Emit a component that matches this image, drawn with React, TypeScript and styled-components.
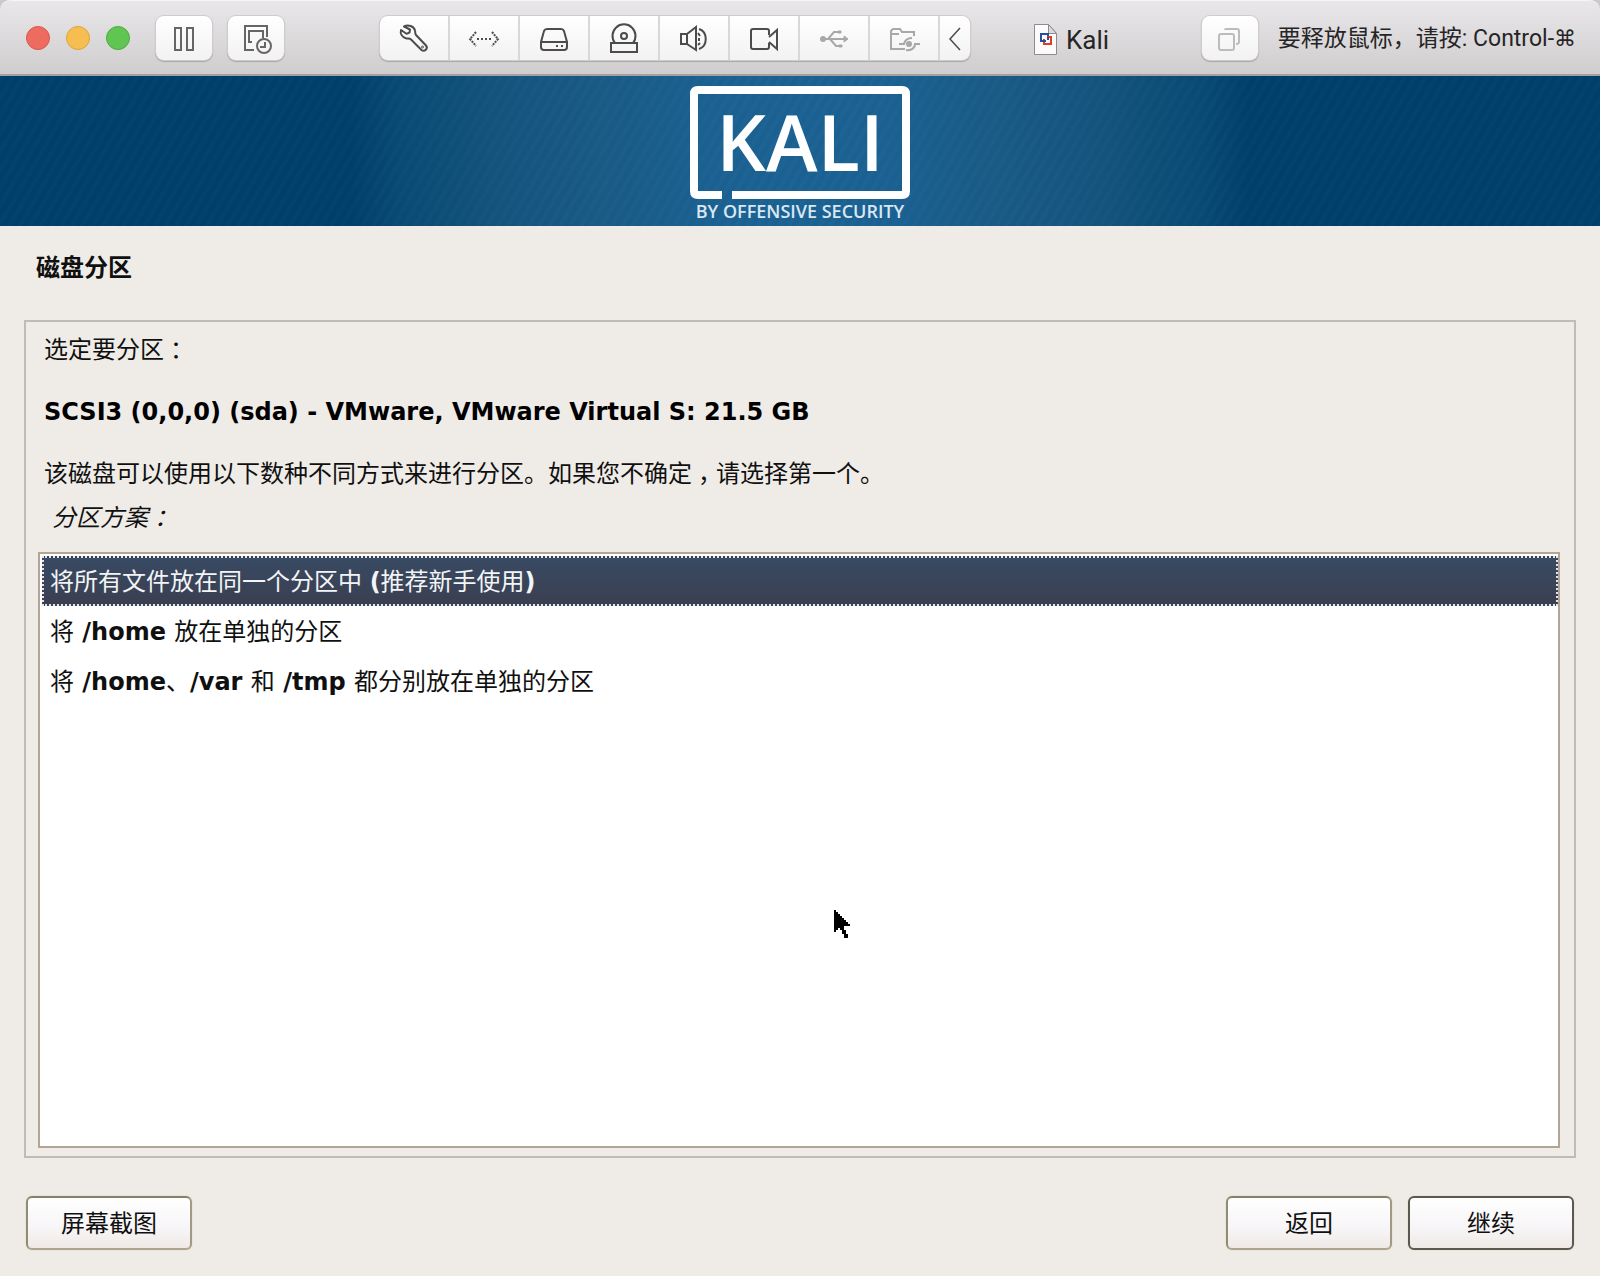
import React, { useState } from "react";
import styled, { createGlobalStyle, css } from "styled-components";

const GlobalStyle = createGlobalStyle`
  *, *::before, *::after { box-sizing: border-box; }
  html, body, #root { height: 100%; }
  body {
    margin: 0;
    background: #efece7;
    color: #101010;
    font-family: "DejaVu Sans", "Noto Sans CJK SC", sans-serif;
    font-size: 24px;
    line-height: 32px;
  }
  button { font: inherit; color: inherit; margin: 0; padding: 0; cursor: pointer; }
`;

const Window = styled.div`
  min-height: 100%;
  display: flex;
  flex-direction: column;
`;

/* ---------- host window title bar ---------- */

const BarBack = styled.div`
  background: #c9cacc;
`;

const TitleBar = styled.header`
  display: flex;
  align-items: center;
  height: 76px;
  padding: 0 24px 0 26px;
  border-top: 1px solid #f6f4f6;
  border-bottom: 2px solid #a5a1a3;
  border-radius: 10px 10px 0 0;
  background: linear-gradient(#e9e7e9, #d0cdcf);
  font-family: Roboto, "Noto Sans CJK SC", "DejaVu Sans", sans-serif;
  color: #262526;
`;

const Lights = styled.div`
  display: flex;
  gap: 16px;
`;

const Tools = styled.div`
  display: flex;
  gap: 16px;
  margin-left: 26px;
`;

const Release = styled.div`
  display: flex;
  align-items: center;
  gap: 20px;
  margin-left: auto;
`;

const Light = styled.button<{ $fill: string; $edge: string }>`
  width: 24px;
  height: 24px;
  border: 1px solid ${(p) => p.$edge};
  border-radius: 50%;
  background: ${(p) => p.$fill};
`;

const keyFace = css`
  background: linear-gradient(#ffffff, #f3f2f3);
  box-shadow: 0 0 0 1px #cfcccf, 0 1px 1px 1px #a9a6a9;
`;

const ToolButton = styled.button`
  display: flex;
  align-items: center;
  justify-content: center;
  width: 56px;
  height: 44px;
  border: 0;
  border-radius: 8px;
  color: #676567;
  ${keyFace}
  &:disabled { color: #bdbbbd; }
`;

const Segments = styled.div`
  display: flex;
  height: 44px;
  margin-left: 96px;
  border-radius: 8px;
  overflow: hidden;
  ${keyFace}
`;

const Segment = styled.button<{ $narrow?: boolean }>`
  display: flex;
  align-items: center;
  justify-content: center;
  width: ${(p) => (p.$narrow ? 30 : 70)}px;
  border: 0;
  border-right: 2px solid #d9d7d9;
  background: none;
  color: #4d4b4d;
  &:last-child { border-right: 0; }
  &:disabled { color: #a9a7a9; }
`;

const VmName = styled.h1`
  display: flex;
  align-items: center;
  gap: 8px;
  margin: 0 0 0 64px;
  padding-top: 4px;
  font-size: 26px;
  font-weight: 400;
`;

const Hint = styled.span`
  padding-top: 2px;
  font-size: 23px;
`;

const CommandKey = styled.span`
  font-family: "DejaVu Sans", sans-serif;
  font-size: 22px;
  line-height: 24px;
`;

const Icon = ({ w = 32, h = 32, children }: { w?: number; h?: number; children: React.ReactNode }) => (
  <svg width={w} height={h} viewBox={`0 0 ${w} ${h}`} fill="none" stroke="currentColor" strokeWidth="2" aria-hidden="true">
    {children}
  </svg>
);

const PauseIcon = () => (
  <Icon>
    <path d="M7 6h6v22H7zM19 6h6v22h-6z" />
  </Icon>
);

const SnapshotIcon = () => (
  <Icon>
    <path d="M14 28H5V4h22v11" />
    <path d="M12 20H9V9h14v7" />
    <circle cx="24" cy="24" r="7" />
    <path d="M25 20v5h-5" />
  </Icon>
);

const WrenchIcon = () => (
  <Icon>
    <path
      d="M6 4.500C10 2.500 16 4 17 8.500c.5 2-.2 3.200 1 4.500l10 10.500c2.500 3-1.500 6.800-4.500 4.500L13 17.500c-1.500-1.300-3-.6-5-1.200C4 15 2 11.500 3 8l5.500 3.800 3-1.300.5-3z"
      strokeLinejoin="round"
    />
    <circle cx="24.500" cy="25" r="1" strokeWidth="1" />
  </Icon>
);

const NetworkIcon = () => (
  <Icon>
    <path d="M8 10l-6 7 6 7M24 10l6 7-6 7" strokeDasharray="2 1" />
    <path d="M9 17h2M13 17h2M17 17h2M21 17h2" />
  </Icon>
);

const DiskIcon = () => (
  <Icon>
    <path d="M9 7h14c1.500 0 2.500.8 3 2l3 11v5c0 2-1 3-3 3H6c-2 0-3-1-3-3v-5L6 9c.5-1.200 1.500-2 3-2zM3 20h26" />
    <path d="M18 24h2M23 24h2" />
  </Icon>
);

const OpticalIcon = () => (
  <Icon>
    <path d="M3 21h26v9H3zM7 21a11.500 11.500 0 1 1 18 0" />
    <circle cx="16" cy="14" r="3" />
  </Icon>
);

const SoundIcon = () => (
  <Icon>
    <path d="M3 12h6v10H3zM9 12l9-7v23l-9-6" />
    <path d="M21 7c9 3 9 17 0 20M20 11l2 3M21 16v3M20 23l2-2" />
  </Icon>
);

const CameraIcon = () => (
  <Icon>
    <path d="M21 13V9q0-2-2-2H5q-2 0-2 2v16q0 2 2 2h14q2 0 2-2v-4" />
    <path d="M21 15l8-7v19l-8-7" />
  </Icon>
);

const UsbIcon = () => (
  <Icon>
    <circle cx="5" cy="17" r="2" fill="currentColor" />
    <path d="M5 17h22M10 17l6-7h5M12 17l6 7h5" />
    <path d="M26 14l4 3-4 3zM20 9h3v2h-3zM21 23h3v2h-3z" fill="currentColor" strokeWidth="1" />
  </Icon>
);

const SharedFolderIcon = () => (
  <Icon>
    <path d="M17 27H3V9l2-2h7l2 3h12v4M3 12h8" />
    <path d="M11 22h5c1-4 4-6 8-6M18 28c5 1 9-2 9-6h5" />
    <circle cx="21" cy="22" r="2" fill="currentColor" />
  </Icon>
);

const CollapseIcon = () => (
  <Icon w={16}>
    <path d="M13 6L3 17l10 11" strokeWidth="1.500" />
  </Icon>
);

const UnityIcon = () => (
  <Icon>
    <rect x="5" y="12" width="15" height="16" rx="2" />
    <path d="M11 8q0-1 1-1h11q2 0 2 2v11q0 2-3 2" />
  </Icon>
);

const VmDocIcon = () => (
  <svg width="24" height="32" viewBox="0 0 24 32" aria-hidden="true">
    <path d="M.5.500h14l8 9v21H.5z" fill="#fbfbfb" stroke="#8d8b8d" />
    <path d="M14.500.500v9h8z" fill="#dcdadc" stroke="#8d8b8d" />
    <path d="M9 17H7v-7h7v3" fill="none" stroke="#26509c" strokeWidth="2" />
    <path d="M10 15v5h7v-7h-4" fill="none" stroke="#e03a2c" strokeWidth="2" />
    <path d="M9 17h3M14 13v3" fill="none" stroke="#26509c" strokeWidth="2" />
  </svg>
);

/* ---------- installer banner ---------- */

const Banner = styled.div`
  display: flex;
  justify-content: center;
  height: 150px;
  padding-top: 10px;
  background:
    repeating-linear-gradient(120deg, rgba(255, 255, 255, 0.015) 0 3px, rgba(255, 255, 255, 0) 5px 9px),
    linear-gradient(
      90deg,
      #003f6c 0%,
      #003f6c 22%,
      #084a73 25%,
      #13537c 31%,
      #195a86 38%,
      #1a6192 45%,
      #1a6192 55%,
      #195a86 62%,
      #13537c 69%,
      #084a73 75%,
      #003f6c 78%,
      #003f6c 100%
    );
`;

const KaliLogo = () => (
  <svg width="220" height="136" viewBox="0 0 220 136" role="img" aria-label="Kali by Offensive Security">
    <path
      d="M32 109H8q-4 0-4-4V8q0-4 4-4h204q4 0 4 4v97q0 4-4 4H42"
      fill="none"
      stroke="#fff"
      strokeWidth="8"
    />
    <text x="110" y="85" textAnchor="middle" fill="#fff" fontFamily="'Open Sans', sans-serif" fontWeight="600" fontSize="78">
      KALI
    </text>
    <text x="110" y="132" textAnchor="middle" fill="#d9e8f2" fontFamily="'Open Sans', sans-serif" fontWeight="600" fontSize="18">
      BY OFFENSIVE SECURITY
    </text>
  </svg>
);

/* ---------- installer page ---------- */

const Page = styled.main`
  flex: 1;
  display: flex;
  flex-direction: column;
  padding: 26px 24px;
`;

const PageTitle = styled.h2`
  margin: 0 12px 36px;
  font-size: 24px;
  line-height: 32px;
  font-weight: 700;
`;

const Frame = styled.section`
  flex: 1;
  display: flex;
  flex-direction: column;
  border: 2px solid #bfbcb3;
  padding: 12px 14px 8px 12px;
`;

const Line = styled.p`
  margin: 0 6px 30px;
  line-height: 32px;
`;

const DiskLine = styled(Line)`
  font-weight: 700;
  color: #000;
`;

const Explain = styled(Line)`
  margin-bottom: 12px;
`;

const Prompt = styled(Line)`
  margin: 0 14px 18px;
  font-style: italic;
`;

/* full-width punctuation centred in its cell */
const Mid = styled.span`
  display: inline-block;
  width: 24px;
  text-align: center;
  font-feature-settings: "halt";
`;

const Options = styled.div`
  flex: 1;
  position: relative;
  border: 2px solid #b2a596;
  padding: 2px 0 0 2px;
  background: #fff;
`;

const Option = styled.label`
  display: flex;
  align-items: center;
  height: 50px;
  padding: 2px 6px 0;
  border: 2px solid transparent;
  white-space: pre;
  &:has(input:checked) {
    color: #f3f4f6;
    background: linear-gradient(#384a63, #3b3f50);
    border: 2px dotted #e4e4ea;
  }
`;

const Radio = styled.input`
  appearance: none;
  width: 0;
  height: 0;
  margin: 0;
  outline: 0;
`;

const Strong = styled.b`
  font-weight: 700;
`;

const Pointer = styled.svg`
  position: absolute;
  left: 794px;
  top: 356px;
`;

const Actions = styled.footer`
  display: flex;
  gap: 16px;
  margin: 38px 2px 0;
`;

const Action = styled.button<{ $focus?: boolean; $first?: boolean }>`
  width: 166px;
  height: 54px;
  padding-top: 2px;
  margin-right: ${(p) => (p.$first ? "auto" : "0")};
  border: 2px solid;
  border-color: ${(p) => (p.$focus ? "#5b5851" : "#85816c #a09a84 #b0a48f #8f8b76")};
  border-radius: 6px;
  background: linear-gradient(#ffffff, #f8f6f8 55%, #efeae6);
  box-shadow: 0 0 0 1px #e9e5d9;
`;

const schemes: React.ReactNode[] = [
  <>将所有文件放在同一个分区中 <Strong>(</Strong>推荐新手使用<Strong>)</Strong></>,
  <>将<Strong> /home </Strong>放在单独的分区</>,
  <>将<Strong> /home</Strong>、<Strong>/var </Strong>和<Strong> /tmp </Strong>都分别放在单独的分区</>,
];

export default function App() {
  const [selected, setSelected] = useState(0);
  return (
    <>
      <GlobalStyle />
      <Window>
        <BarBack>
          <TitleBar>
            <Lights>
              <Light aria-label="关闭" $fill="#ed6b5f" $edge="#d9574b" />
              <Light aria-label="最小化" $fill="#f6be50" $edge="#dda33a" />
              <Light aria-label="缩放" $fill="#61c554" $edge="#4cab40" />
            </Lights>
            <Tools>
              <ToolButton aria-label="暂停"><PauseIcon /></ToolButton>
              <ToolButton aria-label="快照"><SnapshotIcon /></ToolButton>
            </Tools>
            <Segments>
              <Segment aria-label="设置"><WrenchIcon /></Segment>
              <Segment aria-label="网络"><NetworkIcon /></Segment>
              <Segment aria-label="硬盘"><DiskIcon /></Segment>
              <Segment aria-label="光盘"><OpticalIcon /></Segment>
              <Segment aria-label="声音"><SoundIcon /></Segment>
              <Segment aria-label="摄像头"><CameraIcon /></Segment>
              <Segment aria-label="USB" disabled><UsbIcon /></Segment>
              <Segment aria-label="共享文件夹" disabled><SharedFolderIcon /></Segment>
              <Segment aria-label="收起" $narrow><CollapseIcon /></Segment>
            </Segments>
            <VmName><VmDocIcon />Kali</VmName>
            <Release>
              <ToolButton aria-label="Unity" disabled><UnityIcon /></ToolButton>
              <Hint>要释放鼠标，请按: Control-<CommandKey>⌘</CommandKey></Hint>
            </Release>
          </TitleBar>
        </BarBack>
        <Banner><KaliLogo /></Banner>
        <Page>
          <PageTitle>磁盘分区</PageTitle>
          <Frame>
            <Line>选定要分区<Mid>：</Mid></Line>
            <DiskLine>SCSI3 (0,0,0) (sda) - VMware, VMware Virtual S: 21.5 GB</DiskLine>
            <Explain>该磁盘可以使用以下数种不同方式来进行分区。如果您不确定<Mid>，</Mid>请选择第一个。</Explain>
            <Prompt id="scheme">分区方案<Mid>：</Mid></Prompt>
            <Options role="radiogroup" aria-labelledby="scheme">
              {schemes.map((text, i) => (
                <Option key={i}>
                  <Radio type="radio" name="scheme" checked={selected === i} onChange={() => setSelected(i)} />
                  <span>{text}</span>
                </Option>
              ))}
              <Pointer width="16" height="28" viewBox="0 0 8 14" shapeRendering="crispEdges" aria-hidden="true">
                <path d="M0 0h1v1h1v1h1v1h1v1h1v1h1v1h1v1h1v1H5v2h1v2h1v2H5v-2H4v-2H3V9H2v1H1v1H0z" fill="#000" />
              </Pointer>
            </Options>
          </Frame>
          <Actions>
            <Action $first>屏幕截图</Action>
            <Action>返回</Action>
            <Action $focus>继续</Action>
          </Actions>
        </Page>
      </Window>
    </>
  );
}
